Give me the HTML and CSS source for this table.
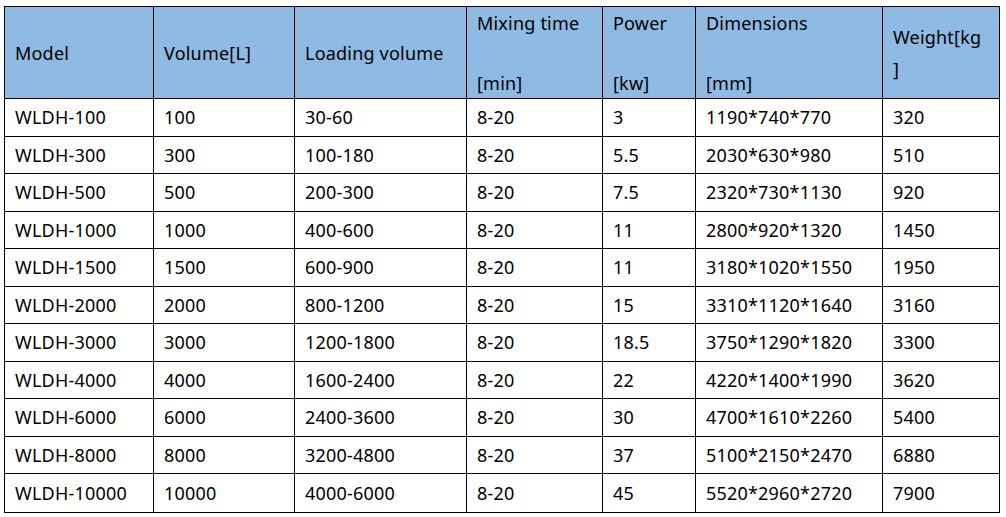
FILE: index.html
```html
<!DOCTYPE html>
<html>
<head>
<meta charset="utf-8">
<link rel="stylesheet" href="styles.css">
</head>
<body>
<div class="wrap">
<table class="spec">
<colgroup>
<col class="c1"><col class="c2"><col class="c3"><col class="c4"><col class="c5"><col class="c6"><col class="c7">
</colgroup>
<thead>
<tr>
<th>Model</th>
<th>Volume[L]</th>
<th>Loading volume</th>
<th>Mixing time<br><br>[min]</th>
<th>Power<br><br>[kw]</th>
<th>Dimensions<br><br>[mm]</th>
<th class="wt">Weight[kg<br>]</th>
</tr>
</thead>
<tbody>
<tr><td>WLDH-100</td><td>100</td><td>30-60</td><td>8-20</td><td>3</td><td>1190*740*770</td><td>320</td></tr>
<tr><td>WLDH-300</td><td>300</td><td>100-180</td><td>8-20</td><td>5.5</td><td>2030*630*980</td><td>510</td></tr>
<tr><td>WLDH-500</td><td>500</td><td>200-300</td><td>8-20</td><td>7.5</td><td>2320*730*1130</td><td>920</td></tr>
<tr><td>WLDH-1000</td><td>1000</td><td>400-600</td><td>8-20</td><td>11</td><td>2800*920*1320</td><td>1450</td></tr>
<tr><td>WLDH-1500</td><td>1500</td><td>600-900</td><td>8-20</td><td>11</td><td>3180*1020*1550</td><td>1950</td></tr>
<tr><td>WLDH-2000</td><td>2000</td><td>800-1200</td><td>8-20</td><td>15</td><td>3310*1120*1640</td><td>3160</td></tr>
<tr><td>WLDH-3000</td><td>3000</td><td>1200-1800</td><td>8-20</td><td>18.5</td><td>3750*1290*1820</td><td>3300</td></tr>
<tr><td>WLDH-4000</td><td>4000</td><td>1600-2400</td><td>8-20</td><td>22</td><td>4220*1400*1990</td><td>3620</td></tr>
<tr><td>WLDH-6000</td><td>6000</td><td>2400-3600</td><td>8-20</td><td>30</td><td>4700*1610*2260</td><td>5400</td></tr>
<tr><td>WLDH-8000</td><td>8000</td><td>3200-4800</td><td>8-20</td><td>37</td><td>5100*2150*2470</td><td>6880</td></tr>
<tr class="last"><td>WLDH-10000</td><td>10000</td><td>4000-6000</td><td>8-20</td><td>45</td><td>5520*2960*2720</td><td>7900</td></tr>
</tbody>
</table>
</div>
</body>
</html>
```
FILE: styles.css
```css
html, body {
  margin: 0;
  padding: 0;
  background: #ffffff;
}
.wrap {
  padding: 6px 0 0 4px;
}
.spec {
  border-collapse: collapse;
  table-layout: fixed;
  width: 995px;
  font-family: "Noto Sans", "Liberation Sans", sans-serif;
  font-size: 18px;
  letter-spacing: 0.2px;
  color: #000;
}
.c1 { width: 149px; }
.c2 { width: 141px; }
.c3 { width: 172px; }
.c4 { width: 136px; }
.c5 { width: 93px; }
.c6 { width: 187px; }
.c7 { width: 117px; }
.spec th, .spec td {
  border: 1px solid #000;
  padding: 0 6px 0 10px;
  text-align: left;
  vertical-align: middle;
}
.spec th {
  background: #8ebae3;
  font-weight: normal;
  height: 91px;
  line-height: 30px;
}
.spec th.wt {
  line-height: 32px;
}
.spec td {
  height: 36.5px;
  line-height: 20px;
  white-space: nowrap;
}
.spec tr.last td {
  height: 38px;
}
```
